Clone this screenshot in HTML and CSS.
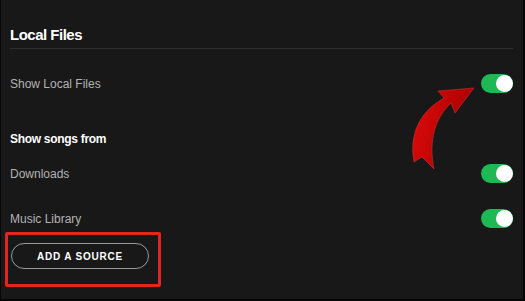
FILE: index.html
```html
<!DOCTYPE html>
<html>
<head>
<meta charset="utf-8">
<link rel="stylesheet" href="styles.css">
</head>
<body>
<div class="frame">
  <div class="settings">
    <h2 class="title">Local Files</h2>
    <div class="row row-first">
      <span class="label">Show Local Files</span>
      <span class="toggle"><span class="knob"></span></span>
    </div>
    <div class="subhead">Show songs from</div>
    <div class="row row-downloads">
      <span class="label">Downloads</span>
      <span class="toggle"><span class="knob"></span></span>
    </div>
    <div class="row row-music">
      <span class="label">Music Library</span>
      <span class="toggle"><span class="knob"></span></span>
    </div>
    <button class="add-btn">ADD A SOURCE</button>
  </div>
  <div class="highlight"></div>
  <svg class="arrow" width="525" height="301" viewBox="0 0 525 301">
    <defs>
      <linearGradient id="ag" x1="0" y1="0" x2="1" y2="0.3">
        <stop offset="0" stop-color="#e00b0b"/>
        <stop offset="1" stop-color="#a80000"/>
      </linearGradient>
    </defs>
    <path d="M414 162 C409 135 419 112 444 98 L438 91 L474 88 L455 113 L451 103 C436 117 428 139 434 169 L422 157 Z" fill="url(#ag)" stroke="#c23030" stroke-width="0.6"/>
  </svg>
</div>
</body>
</html>
```

FILE: styles.css
```css
html, body {
  margin: 0;
  padding: 0;
  background: #000;
}
.frame {
  position: relative;
  width: 525px;
  height: 301px;
  box-sizing: border-box;
  border-left: 1px solid #050505;
  border-right: 2px solid #050505;
  border-bottom: 2px solid #050505;
  background: #181818;
  overflow: hidden;
}
.settings {
  display: flex;
  flex-direction: column;
  padding: 0 10px 0 9px;
  font-family: "Liberation Sans", Arial, sans-serif;
}
.title {
  margin: 0;
  padding-top: 25px;
  padding-bottom: 3px;
  font-size: 15px;
  line-height: 20px;
  font-weight: 700;
  color: #fff;
  letter-spacing: -0.5px;
  border-bottom: 1px solid #2e2e2e;
}
.row {
  display: flex;
  align-items: center;
  justify-content: space-between;
  height: 19px;
}
.row-first { margin-top: 25px; }
.row-downloads { margin-top: 17px; }
.row-music { margin-top: 26px; }
.label {
  font-size: 12px;
  line-height: 16px;
  color: #b3b3b3;
}
.subhead {
  margin-top: 38px;
  font-size: 12px;
  line-height: 16px;
  font-weight: 700;
  color: #fff;
  letter-spacing: -0.3px;
}
.toggle {
  position: relative;
  width: 32px;
  height: 19px;
  border-radius: 10px;
  background: #1db954;
}
.knob {
  position: absolute;
  top: 1px;
  right: 0;
  width: 17px;
  height: 17px;
  border-radius: 50%;
  background: #fff;
}
.add-btn {
  align-self: flex-start;
  margin-top: 15px;
  margin-left: 1px;
  width: 138px;
  height: 26px;
  border: 1px solid #9a9a9a;
  border-radius: 13px;
  background: transparent;
  color: #fff;
  font-family: "Liberation Sans", Arial, sans-serif;
  font-size: 10px;
  font-weight: 700;
  letter-spacing: 0.8px;
  padding: 0;
}
.highlight {
  position: absolute;
  left: 4px;
  top: 232px;
  width: 150px;
  height: 49px;
  border: 3px solid #e52420;
  border-radius: 2px;
}
.arrow {
  position: absolute;
  left: -1px;
  top: 0;
}
```
